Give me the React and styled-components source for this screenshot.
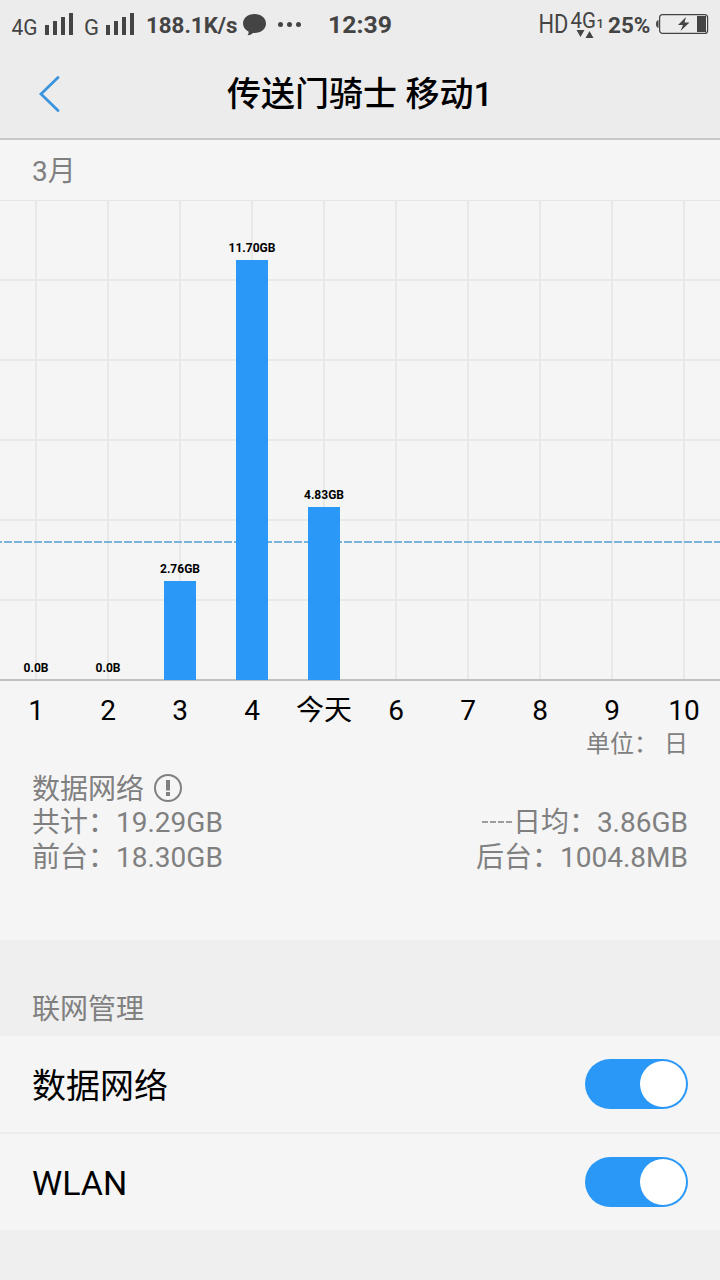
import React from 'react'
import styled, { createGlobalStyle } from "styled-components";

const GlobalStyle = createGlobalStyle`
  * {
    box-sizing: border-box;
  }
  body {
    margin: 0;
    background-color: #efefef;
    font-family: Roboto, "Noto Sans CJK SC", sans-serif;
  }
  svg {
    display: block;
    flex: none;
  }
`;

const Page = styled.div`
  width: 720px;
  height: 1280px;
  overflow: hidden;
  background-color: #efefef;
`;
const Top = styled.header`
  height: 140px;
  background-color: #ececec;
  border-bottom: 2px solid #c8c8c8;
`;
const StatusBar = styled.div`
  height: 50px;
  display: flex;
  color: #444;
  line-height: 50px;
  font-weight: 700;
  white-space: nowrap;
`;
const Speed = styled.span`
  width: 96px;
  font-size: 22.3px;
`;
const Clock = styled.span`
  flex: 1;
  font-size: 24.8px;
`;
const Percent = styled.span`
  width: 48px;
  font-size: 22.5px;
`;
const NavBar = styled.div`
  height: 88px;
  display: grid;
  grid-template-columns: 80px 1fr 80px;
  align-items: center;
`;
const BackButton = styled.button`
  padding: 0 0 0 38px;
  border: none;
  background: none;
`;
const Title = styled.h1`
  margin: 0;
  padding-bottom: 1px;
  font-size: 34px;
  font-weight: 500;
  line-height: 50px;
  text-align: center;
  color: #000;
`;
const Usage = styled.section`
  height: 800px;
  background-color: #f5f5f5;
`;
const Month = styled.div`
  height: 60px;
  padding-left: 32px;
  line-height: 64px;
  font-size: 28px;
  color: #808080;
`;
const Days = styled.div`
  height: 47px;
  display: grid;
  grid-template-columns: repeat(10, 72px);
  line-height: 60px;
  font-size: 28px;
  text-align: center;
  color: #000;
`;
const Unit = styled.div`
  height: 43px;
  padding-right: 32px;
  line-height: 32px;
  font-size: 24px;
  word-spacing: -3px;
  text-align: right;
  white-space: pre;
  color: #808080;
`;
const Stats = styled.div`
  padding: 0 32px;
  font-size: 28px;
  color: #808080;
`;
const StatsRow = styled.div`
  height: ${props => props.$height}px;
  display: flex;
  justify-content: ${props => props.$start ? "flex-start" : "space-between"};
  align-items: center;
  gap: 10px;
  line-height: 34px;

  span {
    padding-top: ${props => props.$start ? 3 : 2}px;
  }
`;
const Average = styled.div`
  display: flex;
  align-items: center;
`;
const SectionTitle = styled.div`
  height: 96px;
  padding: 44px 32px 0;
  line-height: 52px;
  font-size: 28px;
  color: #808080;
`;
const Setting = styled.div`
  height: ${props => props.$last ? 96 : 98}px;
  display: flex;
  justify-content: space-between;
  align-items: center;
  padding: 0 32px;
  background-color: #f5f5f5;
  border-bottom: ${props => props.$last ? "none" : "2px solid #ececec"};
  font-size: 34px;
  line-height: 50px;
  color: #000;
`;
const SettingName = styled.span`
  padding-top: ${props => props.$last ? 2 : 3}px;
`;
const Switch = styled.button`
  width: 103px;
  height: 50px;
  display: flex;
  justify-content: flex-end;
  padding: 2px;
  border: none;
  border-radius: 25px;
  background-color: #2a98f7;
`;
const Knob = styled.span`
  width: 46px;
  height: 46px;
  border-radius: 50%;
  background-color: #fff;
`;

const days = [
  { day: "1", label: "0.0B", height: 0 },
  { day: "2", label: "0.0B", height: 0 },
  { day: "3", label: "2.76GB", height: 99 },
  { day: "4", label: "11.70GB", height: 420 },
  { day: "今天", label: "4.83GB", height: 173 },
  { day: "6" },
  { day: "7" },
  { day: "8" },
  { day: "9" },
  { day: "10" },
];

const SignalIcons = () => (
  <svg width="146" height="50" fill="#444">
    <text x="11.5" y="35" fontSize="22" fontWeight="400" textLength="26" lengthAdjust="spacingAndGlyphs">4G</text>
    <path d="M45 25h4v10h-4zM53 21h4v14h-4zM61 17h4v18h-4zM69 13h4v22h-4z" />
    <text x="84" y="35" fontSize="22" fontWeight="400" textLength="15" lengthAdjust="spacingAndGlyphs">G</text>
    <path d="M106 25h4v10h-4zM114 21h4v14h-4zM122 17h4v18h-4zM130 13h4v22h-4z" />
  </svg>
)

const MessageIcons = () => (
  <svg width="86" height="50" fill="#444">
    <path d="M12.500 14C19 14 24 18 24 23.500S19 33 12.500 33L11 32.900Q9 35 5.500 35.200Q7 33.500 6.500 31.500Q1 28.500 1 23.500C1 18 6 14 12.500 14Z" />
    <circle cx="38.500" cy="24.500" r="2.500" />
    <circle cx="47.500" cy="24.500" r="2.500" />
    <circle cx="56.500" cy="24.500" r="2.500" />
  </svg>
)

const NetworkIcons = () => (
  <svg width="70" height="50" fill="#444">
    <text transform="translate(.5 33) scale(.84 1)" fontSize="26" fontWeight="400">HD</text>
    <text transform="translate(32.500 27.500) scale(.93 1)" fontSize="22" fontWeight="400">4G</text>
    <text x="58.500" y="28" fontSize="13" fontWeight="500">1</text>
    <path d="M38.500 30h8l-4 7zM47.500 38h8l-4-7z" />
  </svg>
)

const BatteryIcon = () => (
  <svg width="64" height="50">
    <path d="M2.500 20Q0 20.500 0 24t2.500 4z" fill="#444" />
    <rect x="3.600" y="14.600" width="48" height="18.800" rx="3" fill="none" stroke="#444" strokeWidth="1.200" />
    <rect x="41" y="16" width="9" height="16" fill="#444" />
    <path d="M30 17l-8 8h5l-2.500 6 9-8.500h-5z" fill="#444" />
  </svg>
)

const UsageChart = () => (
  <svg width="720" height="481" shapeRendering="crispEdges">
    <rect width="720" height="1" fill="#e6e6e6" />
    {[79, 159, 239, 319, 399].map(y => (
      <rect key={y} y={y} width="720" height="2" fill="#e8e8e8" />
    ))}
    {days.map((d, i) => (
      <rect key={d.day} x={i * 72 + 35} width="2" height="479" fill="#e8e8e8" />
    ))}
    <rect y="479" width="720" height="2" fill="#c0c0c0" />
    <path d="M-6 342H720" stroke="#79b3da" strokeWidth="2" strokeDasharray="8 2" />
    {days.filter(d => d.label).map((d, i) => (
      <g key={d.day}>
        <rect x={i * 72 + 20} y={480 - d.height} width="32" height={d.height} fill="#2a98f7" />
        <text x={i * 72 + 36} y={472 - d.height} fontSize="12" fontWeight="700" textAnchor="middle">{d.label}</text>
      </g>
    ))}
  </svg>
)

const SettingRow = ({ name, last }) => (
  <Setting $last={last}>
    <SettingName $last={last}>{name}</SettingName>
    <Switch role="switch" aria-checked="true" aria-label={name}>
      <Knob />
    </Switch>
  </Setting>
)

const App = () => {
  return (
    <Page>
      <GlobalStyle />
      <Top>
        <StatusBar>
          <SignalIcons />
          <Speed>188.1K/s</Speed>
          <MessageIcons />
          <Clock>12:39</Clock>
          <NetworkIcons />
          <Percent>25%</Percent>
          <BatteryIcon />
        </StatusBar>
        <NavBar>
          <BackButton aria-label="返回">
            <svg width="24" height="38" fill="none" stroke="#3c94dc" strokeWidth="2.800">
              <path d="M20 2.500L3 19l17 16.500" strokeLinecap="round" />
            </svg>
          </BackButton>
          <Title>传送门骑士 移动1</Title>
        </NavBar>
      </Top>
      <Usage>
        <Month>3月</Month>
        <UsageChart />
        <Days>
          {days.map(d => <span key={d.day}>{d.day}</span>)}
        </Days>
        <Unit>单位：  日</Unit>
        <Stats>
          <StatsRow $height={34} $start>
            <span>数据网络</span>
            <svg width="28" height="28" fill="#808080">
              <circle cx="14" cy="14" r="13" fill="none" stroke="#808080" strokeWidth="2" />
              <path d="M12 6h4v10.500h-4zM12 18h4v4h-4z" />
            </svg>
          </StatsRow>
          <StatsRow $height={34}>
            <span>共计：19.29GB</span>
            <Average>
              <svg width="32" height="4">
                <path d="M1 2H32" stroke="#808080" strokeWidth="1.500" strokeDasharray="6 2" />
              </svg>
              <span>日均：3.86GB</span>
            </Average>
          </StatsRow>
          <StatsRow $height={36}>
            <span>前台：18.30GB</span>
            <span>后台：1004.8MB</span>
          </StatsRow>
        </Stats>
      </Usage>
      <SectionTitle>联网管理</SectionTitle>
      <SettingRow name="数据网络" />
      <SettingRow name="WLAN" last />
    </Page>
  )
}

export default App
